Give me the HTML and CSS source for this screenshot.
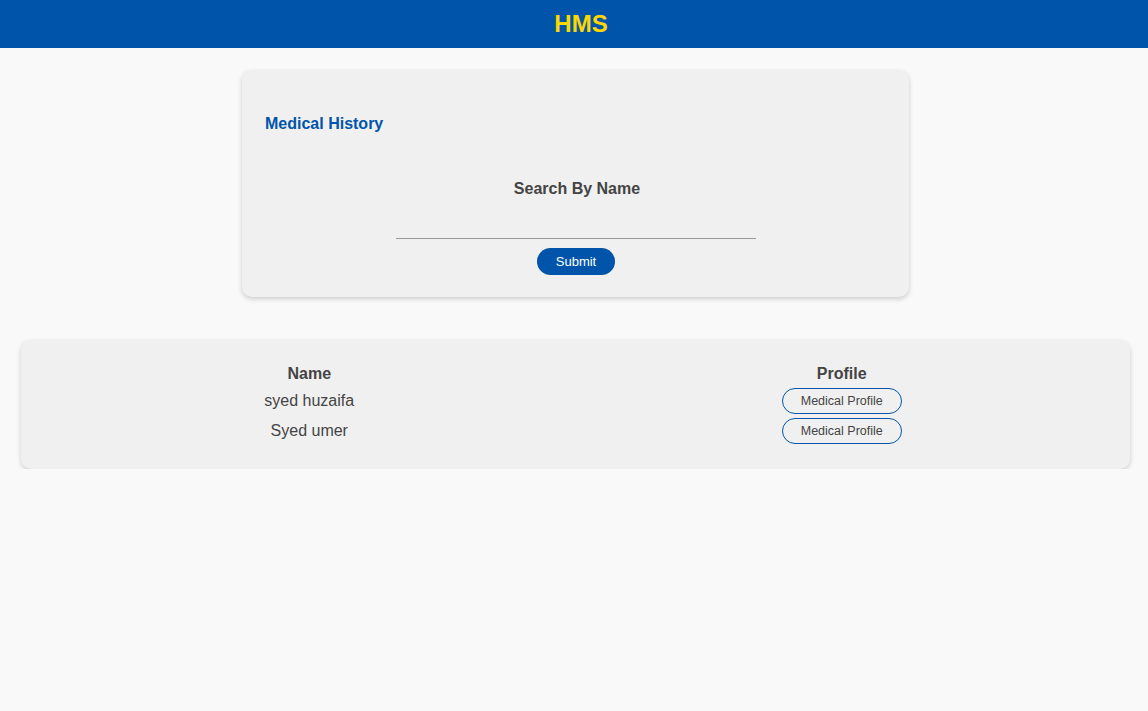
FILE: index.html
```html
<!DOCTYPE html>
<html>
<head>
<meta charset="utf-8">
<link rel="stylesheet" href="styles.css">
</head>
<body>
<header class="topbar"><h1 class="brand">HMS</h1></header>
<main class="page">
  <section class="card search-card">
    <h2 class="card-title">Medical History</h2>
    <form class="search-form">
      <label class="search-label" for="name">Search By Name</label>
      <input class="search-input" id="name" type="text">
      <button class="btn-submit" type="button">Submit</button>
    </form>
  </section>
  <section class="card results-card">
    <table class="results">
      <thead>
        <tr><th>Name</th><th>Profile</th></tr>
      </thead>
      <tbody>
        <tr><td>syed huzaifa</td><td><button class="btn-outline" type="button">Medical Profile</button></td></tr>
        <tr><td>Syed umer</td><td><button class="btn-outline" type="button">Medical Profile</button></td></tr>
      </tbody>
    </table>
  </section>
</main>
</body>
</html>
```
FILE: styles.css
```css
* { box-sizing: border-box; }
html, body { margin: 0; padding: 0; }
body {
  background: #f9f9f9;
  font-family: "Liberation Sans", Arial, sans-serif;
  color: #444;
}
.topbar {
  height: 48px;
  background: #0055aa;
  display: flex;
  align-items: center;
  justify-content: center;
}
.brand {
  margin: 0;
  font-size: 24px;
  font-weight: bold;
  color: #ffd700;
  line-height: 1;
  padding-left: 14px;
}
.page {
  display: flex;
  flex-direction: column;
  padding-top: 22px;
}
.card {
  background: #f0f0f0;
  border-radius: 10px;
  box-shadow: 0 2px 5px rgba(0,0,0,0.18);
}
.search-card {
  width: 667px;
  margin: 0 0 0 242px;
  height: 227px;
  padding: 44px 22px 0 23px;
}
.card-title {
  margin: 0;
  font-size: 16px;
  font-weight: bold;
  color: #0055aa;
  line-height: 20px;
}
.search-form {
  display: flex;
  flex-direction: column;
  align-items: center;
  padding-top: 45px;
}
.search-label {
  font-size: 16px;
  font-weight: bold;
  color: #444;
  line-height: 20px;
  margin-left: 2px;
}
.search-input {
  width: 360px;
  height: 26px;
  margin-top: 14px;
  border: none;
  border-bottom: 1px solid #999;
  background: transparent;
  outline: none;
  margin-left: 0;
}
.btn-submit {
  margin-top: 9px;
  width: 78px;
  height: 27px;
  border: none;
  border-radius: 14px;
  background: #0055aa;
  color: #fff;
  font-family: "Liberation Sans", Arial, sans-serif;
  font-size: 13px;
  padding: 0;
}
.results-card {
  width: 1109px;
  margin: 43px 0 0 21px;
  height: 129px;
  padding: 25px 22px 0 22px;
}
.results {
  width: 100%;
  border-collapse: collapse;
}
.results th {
  font-size: 16px;
  font-weight: bold;
  color: #444;
  text-align: center;
  padding: 0 0 3px;
  height: 21px;
  line-height: 18px;
  vertical-align: top;
}
.results td {
  font-size: 16px;
  color: #444;
  text-align: center;
  padding: 2px 0;
  height: 30px;
}
.results th, .results td { width: 50%; }
.btn-outline {
  width: 120px;
  height: 26px;
  border: 1px solid #0055aa;
  border-radius: 13px;
  background: transparent;
  color: #444;
  font-family: "Liberation Sans", Arial, sans-serif;
  font-size: 12.5px;
  padding: 0;
  vertical-align: middle;
}
```
